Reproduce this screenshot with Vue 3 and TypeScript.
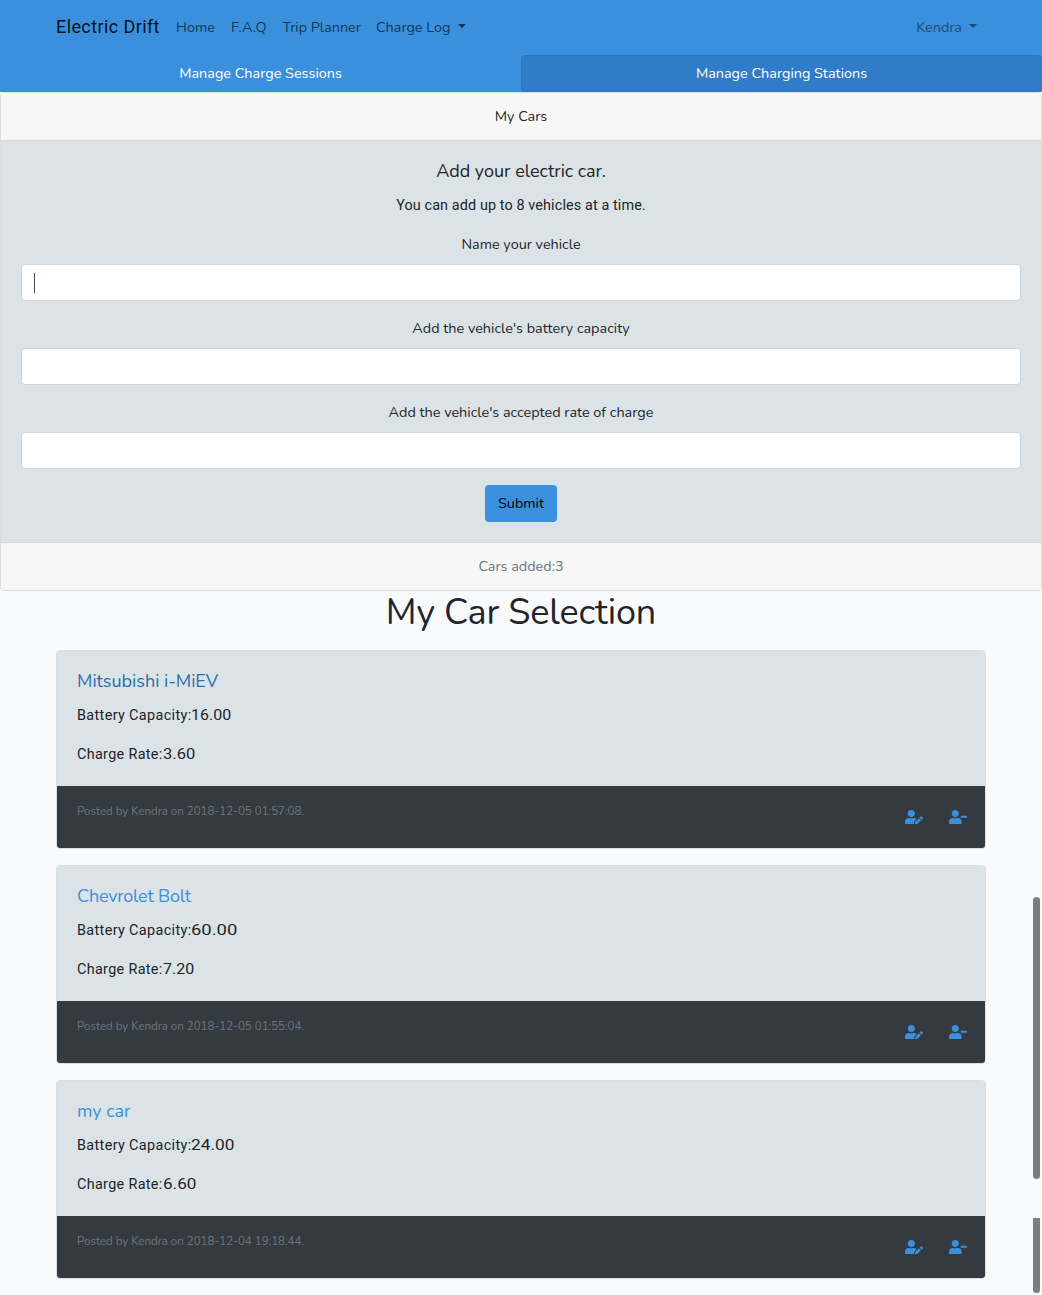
<script setup lang="ts">
interface Figure {
  text: string
  stretch: number
}

interface Car {
  name: string
  tone: string
  capacity: Figure
  rate: Figure
  posted: string
}

const links: string[] = ['Home', 'F.A.Q', 'Trip Planner']

const fields: string[] = [
  'Name your vehicle',
  "Add the vehicle's battery capacity",
  "Add the vehicle's accepted rate of charge",
]

const cars: Car[] = [
  {
    name: 'Mitsubishi i-MiEV',
    tone: 'visited',
    capacity: { text: '16.00', stretch: 1.11 },
    rate: { text: '3.60', stretch: 1.15 },
    posted: '2018-12-05 01:57:08',
  },
  {
    name: 'Chevrolet Bolt',
    tone: 'tight',
    capacity: { text: '60.00', stretch: 1.28 },
    rate: { text: '7.20', stretch: 1.11 },
    posted: '2018-12-05 01:55:04',
  },
  {
    name: 'my car',
    tone: 'plain',
    capacity: { text: '24.00', stretch: 1.2 },
    rate: { text: '6.60', stretch: 1.19 },
    posted: '2018-12-04 19:18:44',
  },
]
</script>

<template>
  <div class="page">
    <nav class="navbar">
      <div class="container nav-row">
        <a class="brand">Electric Drift</a>
        <a v-for="link in links" :key="link" class="nav-link">{{ link }}</a>
        <a class="nav-link log">Charge Log <i class="caret"></i></a>
        <a class="nav-link user">Kendra <i class="caret"></i></a>
      </div>
    </nav>

    <div class="tabs">
      <a class="tab">Manage Charge Sessions</a>
      <a class="tab active">Manage Charging Stations</a>
    </div>

    <section class="card form-card">
      <header class="card-header">My Cars</header>
      <form class="card-body" @submit.prevent>
        <h5 class="title">Add your electric car.</h5>
        <p class="tech hint">You can add up to 8 vehicles at a time.</p>
        <div v-for="(field, i) in fields" :key="field" class="group">
          <label>{{ field }}</label>
          <div class="control"><span v-if="i === 0" class="cursor"></span></div>
        </div>
        <button class="submit" type="submit">Submit</button>
      </form>
      <footer class="card-footer">Cars added:3</footer>
    </section>

    <h1>My Car Selection</h1>

    <main class="container">
      <article v-for="car in cars" :key="car.name" class="card car">
        <div class="card-body">
          <h5 class="title name" :class="car.tone">{{ car.name }}</h5>
          <p class="tech capacity">Battery Capacity:<span class="figure" :style="{ transform: `scaleX(${car.capacity.stretch})` }">{{ car.capacity.text }}</span></p>
          <p class="tech rate">Charge Rate:<span class="figure" :style="{ transform: `scaleX(${car.rate.stretch})` }">{{ car.rate.text }}</span></p>
        </div>
        <div class="meta">
          <small>Posted by Kendra on {{ car.posted }}.</small>
          <div class="actions">
            <svg viewBox="0 0 640 512"><path d="M224 256c70.7 0 128-57.3 128-128S294.7 0 224 0 96 57.3 96 128s57.3 128 128 128zm89.6 32h-16.7c-22.2 10.2-46.9 16-72.9 16s-50.6-5.8-72.9-16h-16.7C60.2 288 0 348.2 0 422.4V464c0 26.5 21.5 48 48 48h274.9c-2.4-6.8-3.4-14-2.6-21.3l6.8-60.9 1.2-11.1 7.9-7.9 77.3-77.3c-24.5-27.7-60-45.5-99.9-45.5zm45.3 145.3l-6.8 61c-1.1 10.2 7.5 18.8 17.6 17.6l60.9-6.8 137.9-137.9-71.7-71.7-137.9 137.8zM633 268.9L595.1 231c-9.3-9.3-24.5-9.3-33.8 0l-37.8 37.8-4.1 4.1 71.8 71.7 41.8-41.8c9.3-9.4 9.3-24.5 0-33.9z" /></svg>
            <svg viewBox="0 0 640 512"><path d="M624 208H432c-8.8 0-16 7.2-16 16v32c0 8.8 7.2 16 16 16h192c8.8 0 16-7.2 16-16v-32c0-8.8-7.2-16-16-16zm-400 48c70.7 0 128-57.3 128-128S294.7 0 224 0 96 57.3 96 128s57.3 128 128 128zm89.6 32h-16.7c-22.2 10.2-46.9 16-72.9 16s-50.6-5.8-72.9-16h-16.7C60.2 288 0 348.2 0 422.4V464c0 26.5 21.5 48 48 48h352c26.5 0 48-21.5 48-48v-41.6c0-74.2-60.2-134.4-134.4-134.4z" /></svg>
          </div>
        </div>
      </article>
    </main>

    <span class="scroll-thumb upper"></span>
    <span class="scroll-thumb lower"></span>
  </div>
</template>

<style>
body {
  background: #f8fafc;
}
</style>

<style scoped>
.page,
.page * {
  box-sizing: border-box;
}
.page {
  position: relative;
  height: 1295px;
  overflow: hidden;
  background: #f8fafc;
  color: #212529;
  font: 14.4px/23px Nunito, Lato, sans-serif;
}
h1,
h5,
p {
  margin: 0;
  font-weight: 400;
}
.container {
  width: 930px;
  margin: 0 auto;
}
.navbar {
  height: 55px;
  padding: 8px 0;
  background: #3a90dc;
}
.nav-row {
  display: flex;
  align-items: center;
}
.brand {
  width: 104px;
  margin: 0 8px 2px 0;
  color: rgba(0, 0, 0, 0.9);
  font: 18px/29px Roboto, sans-serif;
  letter-spacing: 0.4px;
  white-space: nowrap;
}
.nav-link {
  padding: 8px;
  color: rgba(0, 0, 0, 0.65);
  white-space: nowrap;
}
.log {
  margin-left: -1px;
}
.user {
  margin-left: auto;
  padding-right: 8.6px;
  color: rgba(0, 0, 0, 0.5);
}
.caret {
  display: inline-block;
  margin-left: 3.7px;
  vertical-align: 3.7px;
  border: 4.3px solid transparent;
  border-top-color: currentColor;
  border-bottom: 0;
}
.tabs {
  display: flex;
  background: #3a90dc;
}
.tab {
  flex: 1;
  height: 37px;
  padding: 6px 12px;
  border: 1px solid #3a90dc;
  border-radius: 4px;
  color: #fff;
  text-align: center;
}
.tab.active {
  border-color: #2f75be;
  background: #307cc8;
}
.card {
  border: 1px solid #dcdddf;
  border-radius: 4px;
  overflow: hidden;
}
.form-card {
  height: 499px;
  text-align: center;
}
.card-header {
  height: 48px;
  padding: 12px;
  border-bottom: 1px solid #d8dadb;
  background: #f7f7f7;
}
.card-body {
  padding: 20px;
  background: #dce3e6;
}
.form-card .card-body {
  height: 401px;
}
.title {
  margin-bottom: 11px;
  font-size: 18px;
  line-height: 21.6px;
}
.tech {
  font-family: Roboto, sans-serif;
}
.hint {
  margin-bottom: 16.4px;
  letter-spacing: 0.11px;
}
.group {
  display: flex;
  flex-direction: column;
  gap: 8px;
  margin-bottom: 16px;
}
.control {
  height: 37px;
  padding: 8px 12px;
  border: 1px solid #ced4da;
  border-radius: 4px;
  background: #fff;
}
.cursor {
  display: block;
  width: 1px;
  height: 20px;
  background: #3f4b57;
}
.submit {
  width: 72px;
  height: 37px;
  padding: 0;
  border: 0;
  border-radius: 4px;
  background: #3a90dc;
  color: #000;
  font: inherit;
}
.card-footer {
  height: 48px;
  padding: 12px;
  border-top: 1px solid #d8dadb;
  background: #f7f7f7;
  color: #6c757d;
}
h1 {
  height: 59px;
  font-size: 36px;
  line-height: 43px;
  letter-spacing: -0.15px;
  text-align: center;
}
.car {
  height: 199px;
  margin-bottom: 16px;
}
.car .card-body {
  height: 135px;
}
.name {
  color: #3a90dc;
}
.name.visited {
  color: #266fae;
}
.name.tight {
  letter-spacing: -0.22px;
}
.capacity {
  margin-bottom: 16px;
  letter-spacing: 0.36px;
}
.rate {
  letter-spacing: 0.33px;
}
.figure {
  display: inline-block;
  letter-spacing: 0;
  transform-origin: left;
}
.meta {
  display: flex;
  justify-content: space-between;
  height: 62px;
  padding: 14px 18px 0 20px;
  background: #343a40;
  color: #6c757d;
}
small {
  font-size: 11.52px;
}
.actions {
  display: flex;
  gap: 26px;
  padding-top: 9.5px;
}
.actions svg {
  width: 18px;
  height: 14.4px;
  fill: #3a90dc;
}
.scroll-thumb {
  position: absolute;
  left: 1033px;
  width: 7px;
  background: #7c7d7e;
}
.upper {
  top: 897px;
  height: 282px;
  border-radius: 4px;
}
.lower {
  top: 1218px;
  height: 75px;
  border-radius: 0 0 4px 4px;
}
</style>
